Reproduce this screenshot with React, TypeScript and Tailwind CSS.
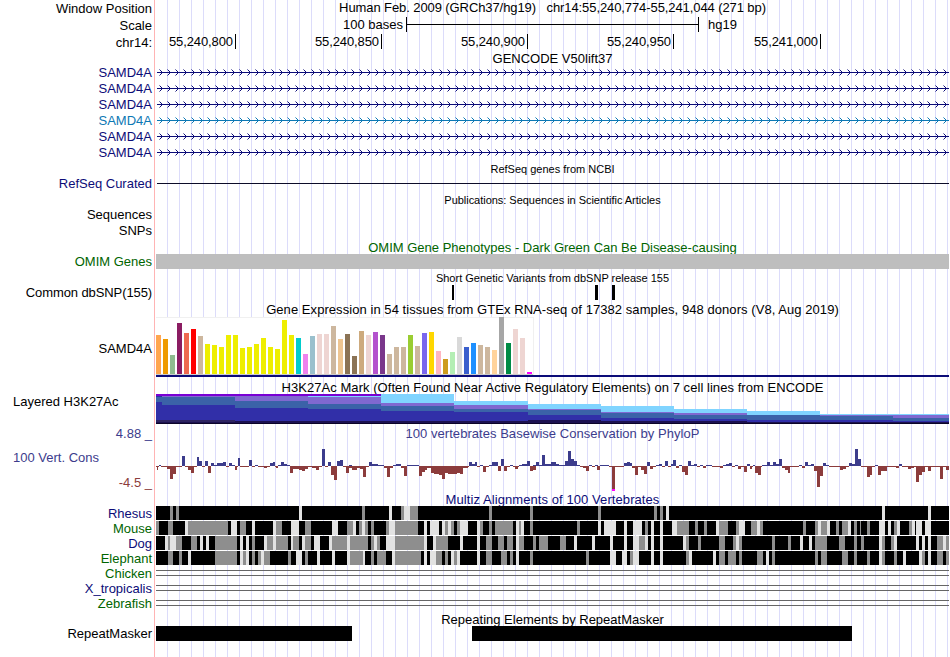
import { ReactNode } from "react";
import clsx from "clsx";

const PLOT_WIDTH = 793;

type Bar = [x: number, width: number, height: number];

const NAVY = "text-[#0c0c78]";
const GREEN = "text-[#006400]";
const SLATE = "text-[#3c3c8c]";

// labels that sit a pixel above the middle of their row
const RAISED = "justify-end pb-[2px]";

const transcripts = [
  { id: 1, highlighted: false },
  { id: 2, highlighted: false },
  { id: 3, highlighted: false },
  { id: 4, highlighted: true },
  { id: 5, highlighted: false },
  { id: 6, highlighted: false },
];

const brown = "#cdb79e";
const pink = "#eed5d2";
const yellow = "#eeee00";

// [height, colour] for each tissue
const tissues: [number, string][] = [
  [39, "#ffa54f"], [35, "#ee9a00"], [19, "#8fbc8f"], [51, "#8b1c62"],
  [41, "#ee6a50"], [45, "#ff0000"], [38, brown], [30, yellow],
  [29, yellow], [27, yellow], [39, yellow], [39, yellow],
  [26, yellow], [27, yellow], [30, yellow], [36, yellow],
  [27, yellow], [25, yellow], [54, yellow], [39, yellow],
  [36, "#00cdcd"], [20, "#ee82ee"], [38, "#9ac0cd"], [40, pink],
  [40, pink], [48, brown], [35, "#eec591"], [40, "#8b7355"],
  [18, "#8b7355"], [43, "#cdaa7d"], [39, pink], [42, "#b452cd"],
  [39, "#7a378b"], [20, brown], [27, brown], [27, brown],
  [39, "#9acd32"], [28, brown], [41, "#7a67ee"], [42, "#ffd700"],
  [23, "#ffb6c1"], [15, "#cd9b1d"], [22, "#b4eeb4"], [37, "#d9d9d9"],
  [27, "#3a5fcd"], [31, "#1e90ff"], [29, brown], [27, brown],
  [24, "#ffd39b"], [57, "#a6a6a6"], [31, "#008b45"], [45, pink],
  [36, pink], [2, "#ff00ff"],
];

const layerColors = ["#7a00d4", "#80d4ff", "#8068d0", "#3b62a8", "#312fa8", "#1c1150"];

// start, end and the top of each of the layers above
const histone: { from: number; to: number; tops: number[] }[] = [
  { from: 0, to: 6, tops: [0, 2, 2, 2, 8, 26] },
  { from: 6, to: 79, tops: [0, 2, 2, 3, 11, 26] },
  { from: 79, to: 152, tops: [0, 2, 2, 7, 14, 27] },
  { from: 152, to: 225, tops: [0, 2, 3, 10, 15, 27] },
  { from: 225, to: 298, tops: [0, 0, 9, 12, 17, 27] },
  { from: 298, to: 372, tops: [7, 7, 11, 15, 18, 27] },
  { from: 372, to: 445, tops: [10, 10, 15, 16, 21, 26] },
  { from: 445, to: 518, tops: [12, 12, 18, 19, 24, 27] },
  { from: 518, to: 591, tops: [15, 15, 19, 21, 25, 27] },
  { from: 591, to: 664, tops: [17, 17, 21, 21, 26, 28] },
  { from: 664, to: 737, tops: [20, 20, 21, 22, 26, 28] },
  { from: 737, to: 793, tops: [20, 20, 21, 24, 27, 28] },
];

const conserved: Bar[] = [
  [3, 2, 1], [26, 3, 10], [41, 2, 9], [43, 3, 5], [49, 3, 5], [55, 3, 3], [58, 3, 1],
  [61, 6, 3], [67, 3, 4], [73, 3, 3], [76, 3, 1], [82, 2, 8], [93, 3, 6], [99, 3, 1],
  [114, 3, 3], [117, 2, 4], [122, 3, 1], [125, 3, 4], [128, 3, 2], [131, 3, 1],
  [166, 3, 17], [172, 3, 4], [181, 3, 5], [184, 3, 6], [193, 3, 1], [213, 3, 4],
  [216, 6, 2], [222, 6, 1], [237, 3, 1], [240, 5, 2], [251, 12, 1], [313, 3, 4],
  [316, 3, 2], [319, 2, 4], [324, 3, 1], [333, 3, 1], [336, 6, 4], [345, 3, 7],
  [354, 3, 1], [363, 3, 1], [366, 5, 2], [371, 3, 5], [377, 3, 1], [380, 3, 4],
  [383, 3, 1], [386, 3, 11], [389, 6, 2], [395, 5, 4], [400, 3, 2], [403, 6, 1],
  [409, 3, 5], [412, 3, 15], [415, 3, 7], [418, 3, 5], [421, 3, 1], [433, 3, 1],
  [439, 3, 1], [444, 9, 1], [468, 3, 3], [471, 3, 4], [474, 2, 3], [491, 3, 4],
  [500, 3, 1], [503, 3, 2], [509, 3, 5], [515, 2, 2], [517, 3, 6], [523, 3, 1],
  [532, 3, 5], [535, 3, 1], [538, 3, 2], [544, 3, 1], [550, 6, 1], [567, 3, 1],
  [570, 3, 2], [573, 3, 3], [579, 3, 1], [591, 3, 2], [597, 2, 1], [606, 5, 1],
  [611, 3, 4], [614, 3, 1], [617, 3, 4], [620, 3, 2], [623, 3, 7], [643, 3, 1],
  [649, 3, 4], [652, 3, 1], [655, 3, 2], [667, 3, 3], [670, 3, 1], [693, 3, 3],
  [696, 3, 2], [699, 3, 17], [702, 3, 7], [719, 3, 1], [743, 3, 2],
];

const accelerated: Bar[] = [
  [1, 1, 4], [11, 3, 3], [14, 3, 13], [17, 3, 8], [32, 3, 4], [35, 3, 7], [52, 3, 7],
  [79, 2, 4], [108, 3, 2], [120, 2, 2], [134, 3, 7], [137, 6, 3], [143, 3, 4],
  [146, 3, 5], [149, 3, 3], [156, 4, 2], [160, 3, 4], [175, 3, 9], [178, 3, 14],
  [190, 3, 7], [193, 3, 2], [196, 5, 4], [201, 3, 2], [204, 3, 3], [207, 3, 11],
  [228, 3, 2], [231, 3, 11], [234, 3, 2], [245, 3, 2], [248, 3, 10], [263, 3, 10],
  [266, 3, 6], [269, 2, 4], [271, 4, 2], [275, 3, 7], [278, 5, 8], [283, 3, 9],
  [286, 3, 13], [289, 3, 7], [292, 9, 8], [301, 3, 7], [304, 3, 8], [307, 5, 2],
  [327, 3, 6], [342, 3, 5], [348, 3, 5], [359, 3, 3], [374, 3, 5], [377, 3, 4],
  [427, 3, 2], [430, 3, 5], [441, 3, 4], [456, 3, 23], [476, 3, 2], [479, 3, 9],
  [485, 3, 4], [488, 3, 8], [494, 3, 3], [520, 3, 2], [526, 3, 6], [529, 3, 9],
  [547, 3, 2], [564, 3, 2], [582, 3, 3], [588, 3, 6], [594, 2, 3], [599, 3, 7],
  [602, 3, 9], [626, 3, 2], [629, 3, 4], [632, 2, 7], [646, 3, 2], [658, 3, 5],
  [661, 3, 21], [664, 3, 10], [684, 3, 4], [687, 3, 3], [711, 3, 11], [714, 2, 9],
  [722, 3, 9], [725, 6, 5], [740, 3, 2], [752, 3, 3], [755, 3, 2], [760, 3, 16],
  [763, 3, 9], [766, 3, 6], [772, 3, 5], [784, 3, 13], [790, 3, 4],
];

// Cells that differ from a perfect match: "g" is gray, "l" is light, then
// start[:width]. The width is 3 unless it is given.
const alignments = [
  {
    name: "Rhesus",
    color: NAVY,
    cells:
      "g14 g20 l143 g206 l233 g245 l248:6 g254:8 g333 g374 g442 g498 g504 l510 l726 l772",
  },
  {
    name: "Mouse",
    color: GREEN,
    cells:
      "g0 g12:5 l29 g32:40 l75:6 g84:6 l96 l117 g120:6 l135:8 g149:6 l176:6 g191:6 l197 g203 l206 g209 g215 g230 l233:6 g239:23 l268 l274:9 l286 g289 l292 g295 g301 l304:8 l321 g324 g333 g339:18 l360 g363:2 l365 g374 g421 l442 l448:12 l468 l477:9 g489 l495 l504 l516:5 g521:12 g539 g548 l560 g563:9 g580 l583:6 g595:6 l601 g604 g647 g659 l662 g665:6 l671 g680 g686:6 l692 g698 g704:1 g711 l723:6 l732 g738 l741 g753 l756 l760:6 l769:6",
  },
  {
    name: "Dog",
    color: NAVY,
    cells:
      "l9 g12:2 l14:6 g20:6 g35:6 l44 l50 g59:22 l84 l90 g96 l108 g111:6 l117 g120:12 l135:2 g137:6 l146 g149:6 l158:6 l173 g176:15 l191 g194:18 g215 l218 g221 l230:9 g239:29 l268 l277 g280:12 l304 l321 g330:6 g342:6 g351:6 l360 g363:5 g377 g383:9 g404:6 l418 l436 l454 l468 l477:6 g483:6 l489 l495 l504 l527 g530 g542 g563:6 g577 l580 g583 g616 g632 l644 l653 g659:12 g683:6 g698 g705 l723 g726 g735 l738 l760 l766 l772 g781:6 l787 g790",
  },
  {
    name: "Elephant",
    color: GREEN,
    cells:
      "g12:5 g23 l32 g59:22 l84 g87 l90 g96 g102 l105 g108:6 g132 l140:6 g149 l161 l176 l191 g194:13 l207:2 g215 g221:9 l236 g239:26 l268 l274:6 g280:6 g289 l295 g298 l301 l321 g330:6 g345:6 g354 l360 g374 g430 l454:6 l466:5 g474 l477:6 l495 l504 g530 l533 l557 g563:6 g572:8 g583 g601:6 l610 g616 g659 g665:6 g686:6 g698 g711 l723 g726 g738 l747 l763 g766 l772 g781:6 g790",
  },
];

const unaligned = [
  { name: "Chicken", color: GREEN },
  { name: "X_tropicalis", color: NAVY },
  { name: "Zebrafish", color: GREEN },
];

interface RowProps {
  height: string;
  label?: ReactNode;
  labelClass?: string;
  children?: ReactNode;
}

function Row({ height, label, labelClass, children }: RowProps) {
  return (
    <div className={clsx("flex", height)}>
      <div
        className={clsx(
          "flex w-[155px] shrink-0 items-center border-r border-[#ffb4b4] pr-[2px]",
          labelClass ?? "justify-end"
        )}
      >
        {label}
      </div>
      <div className="ml-px w-[793px] shrink-0 bg-[repeating-linear-gradient(to_right,transparent_0px,transparent_11px,#dcdcfa_11px,#dcdcfa_12px)]">
        {children}
      </div>
    </div>
  );
}

interface TitleProps {
  height: string;
  label?: ReactNode;
  labelClass?: string;
  className?: string;
  children: ReactNode;
}

function Title({ height, label, labelClass, className, children }: TitleProps) {
  return (
    <Row height={height} label={label} labelClass={labelClass}>
      <div
        className={clsx(
          "flex h-full items-center justify-center whitespace-pre",
          className
        )}
      >
        {children}
      </div>
    </Row>
  );
}

function Plot({ height, children }: { height: number; children: ReactNode }) {
  return (
    <svg
      className="block"
      width={PLOT_WIDTH}
      height={height}
      shapeRendering="crispEdges"
    >
      {children}
    </svg>
  );
}

function Transcript({ color }: { color: string }) {
  const arrows = [];
  const tails = [];
  for (let x = 3; x < PLOT_WIDTH; x += 8) {
    arrows.push(
      `M${x + 1} 5h1v1h-1zM${x + 2} 6h1v1h-1zM${x + 3} 7h1v1h-1zM${x + 2} 8h1v1h-1zM${x + 1} 9h1v1h-1z`
    );
    tails.push(`M${x} 4h1v1h-1zM${x} 10h1v1h-1z`);
  }
  return (
    <Plot height={16}>
      <rect x={1} y={7} width={792} height={1} fill={color} />
      <path d={arrows.join("")} fill={color} />
      <path d={tails.join("")} fill={color} fillOpacity={0.5} />
    </Plot>
  );
}

function Expression() {
  return (
    <Plot height={61}>
      <rect x={0} y={0} width={378} height={58} fill="#f0f0f0" />
      <rect x={0} y={1} width={377} height={56} fill="#fff" />
      {tissues.map(([height, color], i) => (
        <rect key={i} x={i * 7} y={57 - height} width={5} height={height} fill={color} />
      ))}
      <rect x={0} y={57} width={377} height={1} fill="#ccc" />
      <rect x={0} y={58} width={PLOT_WIDTH} height={2} fill="#0c0c78" />
    </Plot>
  );
}

function Histone() {
  return (
    <Plot height={30}>
      {histone.map(({ from, to, tops }) =>
        tops.map((top, i) => (
          <rect
            key={`${from}-${i}`}
            x={from}
            y={top}
            width={to - from}
            height={(tops[i + 1] ?? 30) - top}
            fill={layerColors[i]}
          />
        ))
      )}
      <rect x={0} y={2} width={6} height={1} fill="#312fa8" />
      <rect x={0} y={26} width={79} height={2} fill="#2e2460" />
      <rect x={0} y={29} width={PLOT_WIDTH} height={1} fill="#0c0428" />
    </Plot>
  );
}

function Conservation() {
  // the baseline is only drawn between the positive bars
  const gaps = conserved.map(([x, width], i) => {
    const end = conserved[i + 1]?.[0] ?? PLOT_WIDTH;
    return [x + width, end - x - width];
  });
  return (
    <Plot height={51}>
      <rect x={0} y={25} width={3} height={1} fill="#8c3c3c" />
      {gaps.map(([x, width]) => (
        <rect key={x} x={x} y={25} width={width} height={1} fill="#8c3c3c" />
      ))}
      {conserved.map(([x, width, height]) => (
        <rect key={x} x={x} y={25 - height} width={width} height={height} fill="#3c3c8c" />
      ))}
      {accelerated.map(([x, width, height]) => (
        <rect key={x} x={x} y={25} width={width} height={height} fill="#8c3c3c" />
      ))}
      <rect x={456} y={48} width={3} height={2} fill="#ff00ff" />
    </Plot>
  );
}

function Alignment({ cells }: { cells: string }) {
  return (
    <Plot height={15}>
      <rect x={0} y={0} width={PLOT_WIDTH} height={14} fill="#000" />
      {cells.split(" ").map((cell) => {
        const [x, width = 3] = cell.slice(1).split(":").map(Number);
        return (
          <rect
            key={cell}
            x={x}
            y={0}
            width={width}
            height={14}
            fill={cell[0] === "g" ? "#8e8e8e" : "#e2e2e2"}
          />
        );
      })}
    </Plot>
  );
}

function App() {
  return (
    <div className="h-[657px] w-[950px] overflow-hidden bg-white font-['Liberation_Sans',Arial,sans-serif] text-[13px] leading-[15px] text-black">
      <Title
        height="h-[17px]"
        label="Window Position"
        labelClass="justify-end"
        className="pb-[2px] tracking-[-0.09px]"
      >
        {"Human Feb. 2009 (GRCh37/hg19)   chr14:55,240,774-55,241,044 (271 bp)"}
      </Title>
      <Row height="h-[17px]" label="Scale">
        <div className="flex h-[15px]">
          <div className="w-[250px] pr-[3px] text-right">100 bases</div>
          <div className="flex w-[293px] flex-col border-x border-black pt-[7px]">
            <div className="h-px bg-black" />
          </div>
          <div className="pl-[9px]">hg19</div>
        </div>
      </Row>
      <Row height="h-[17px]" label="chr14:">
        <div className="flex h-[15px] text-right tracking-[-0.1px]">
          <div className="w-[80px] border-r border-black pr-[2px]">55,240,800</div>
          <div className="w-[146px] border-r border-black pr-[2px]">55,240,850</div>
          <div className="w-[146px] border-r border-black pr-[2px]">55,240,900</div>
          <div className="w-[146px] border-r border-black pr-[2px]">55,240,950</div>
          <div className="w-[147px] border-r border-black pr-[2px]">55,241,000</div>
        </div>
      </Row>

      <Title height="h-[14px]">GENCODE V50lift37</Title>
      {transcripts.map(({ id, highlighted }) => (
        <Row
          key={id}
          height="h-[16px]"
          labelClass={RAISED}
          label={
            <span className={highlighted ? "text-[#0c78b4]" : NAVY}>SAMD4A</span>
          }
        >
          <Transcript color={highlighted ? "#0c78b4" : "#0c0c78"} />
        </Row>
      ))}

      <Title height="h-[16px]" className="text-[11px]">
        RefSeq genes from NCBI
      </Title>
      <Row
        height="h-[15px]"
        labelClass={RAISED}
        label={<span className={NAVY}>RefSeq Curated</span>}
      >
        <Plot height={15}>
          <rect x={1} y={6} width={792} height={1} fill="#0c0c28" />
        </Plot>
      </Row>

      <Title height="h-[15px]" className="pt-[2px] text-[11px] tracking-[-0.03px]">
        Publications: Sequences in Scientific Articles
      </Title>
      <Row height="h-[16px]" label="Sequences" labelClass={RAISED} />
      <Row height="h-[16px]" label="SNPs" labelClass={RAISED} />

      <Title height="h-[15px]" className={clsx("pt-[2px]", GREEN)}>
        OMIM Gene Phenotypes - Dark Green Can Be Disease-causing
      </Title>
      <Row height="h-[15px]" label={<span className={GREEN}>OMIM Genes</span>}>
        <div className="h-full bg-[#bebebe]" />
      </Row>

      <Title height="h-[16px]" className="pt-[2px] text-[11px]">
        Short Genetic Variants from dbSNP release 155
      </Title>
      <Row
        height="h-[16px]"
        label={<span className="tracking-[-0.1px]">Common dbSNP(155)</span>}
        labelClass={RAISED}
      >
        <Plot height={15}>
          <rect x={296} y={0} width={2} height={15} />
          <rect x={439} y={0} width={3} height={15} />
          <rect x={456} y={0} width={3} height={15} />
        </Plot>
      </Row>

      <Title height="h-[16px]" className="tracking-[0.06px]">
        Gene Expression in 54 tissues from GTEx RNA-seq of 17382 samples, 948
        donors (V8, Aug 2019)
      </Title>
      <Row height="h-[61px]" label="SAMD4A" labelClass="justify-end pt-[2px]">
        <Expression />
      </Row>

      <Title height="h-[16px]" className="pt-[2px] tracking-[0.05px]">
        H3K27Ac Mark (Often Found Near Active Regulatory Elements) on 7 cell
        lines from ENCODE
      </Title>
      <Row
        height="h-[30px]"
        label="Layered H3K27Ac"
        labelClass="justify-start pl-[13px] pb-[16px]"
      >
        <Histone />
      </Row>

      <Title
        height="h-[17px]"
        labelClass="justify-end pt-[2px]"
        label={<span className={SLATE}>4.88 _</span>}
        className={clsx("pt-[2px] tracking-[0.04px]", SLATE)}
      >
        100 vertebrates Basewise Conservation by PhyloP
      </Title>
      <Row
        height="h-[51px]"
        labelClass="flex-col"
        label={
          <>
            <div className={clsx("w-full pt-[9px] pl-[13px]", SLATE)}>
              100 Vert. Cons
            </div>
            <div className="mt-[10px] w-full text-right text-[#8c3c3c]">-4.5 _</div>
          </>
        }
      >
        <Conservation />
      </Row>

      <Title height="h-[14px]" className={clsx("tracking-[0.08px]", NAVY)}>
        Multiz Alignments of 100 Vertebrates
      </Title>
      {alignments.map(({ name, color, cells }) => (
        <Row
          key={name}
          height="h-[15px]"
          label={<span className={color}>{name}</span>}
        >
          <Alignment cells={cells} />
        </Row>
      ))}
      {unaligned.map(({ name, color }) => (
        <Row
          key={name}
          height="h-[15px]"
          label={<span className={color}>{name}</span>}
        >
          <Plot height={15}>
            <rect x={0} y={4} width={PLOT_WIDTH} height={1} fill="#666" />
            <rect x={0} y={9} width={PLOT_WIDTH} height={1} fill="#666" />
          </Plot>
        </Row>
      ))}

      <Title height="h-[15px]" className="pt-[2px]">
        Repeating Elements by RepeatMasker
      </Title>
      <Row height="h-[15px]" label="RepeatMasker">
        <Plot height={15}>
          <rect x={0} y={0} width={196} height={15} />
          <rect x={316} y={0} width={380} height={15} />
        </Plot>
      </Row>
      <Row height="h-[16px]" />
    </div>
  );
}

export default App;
